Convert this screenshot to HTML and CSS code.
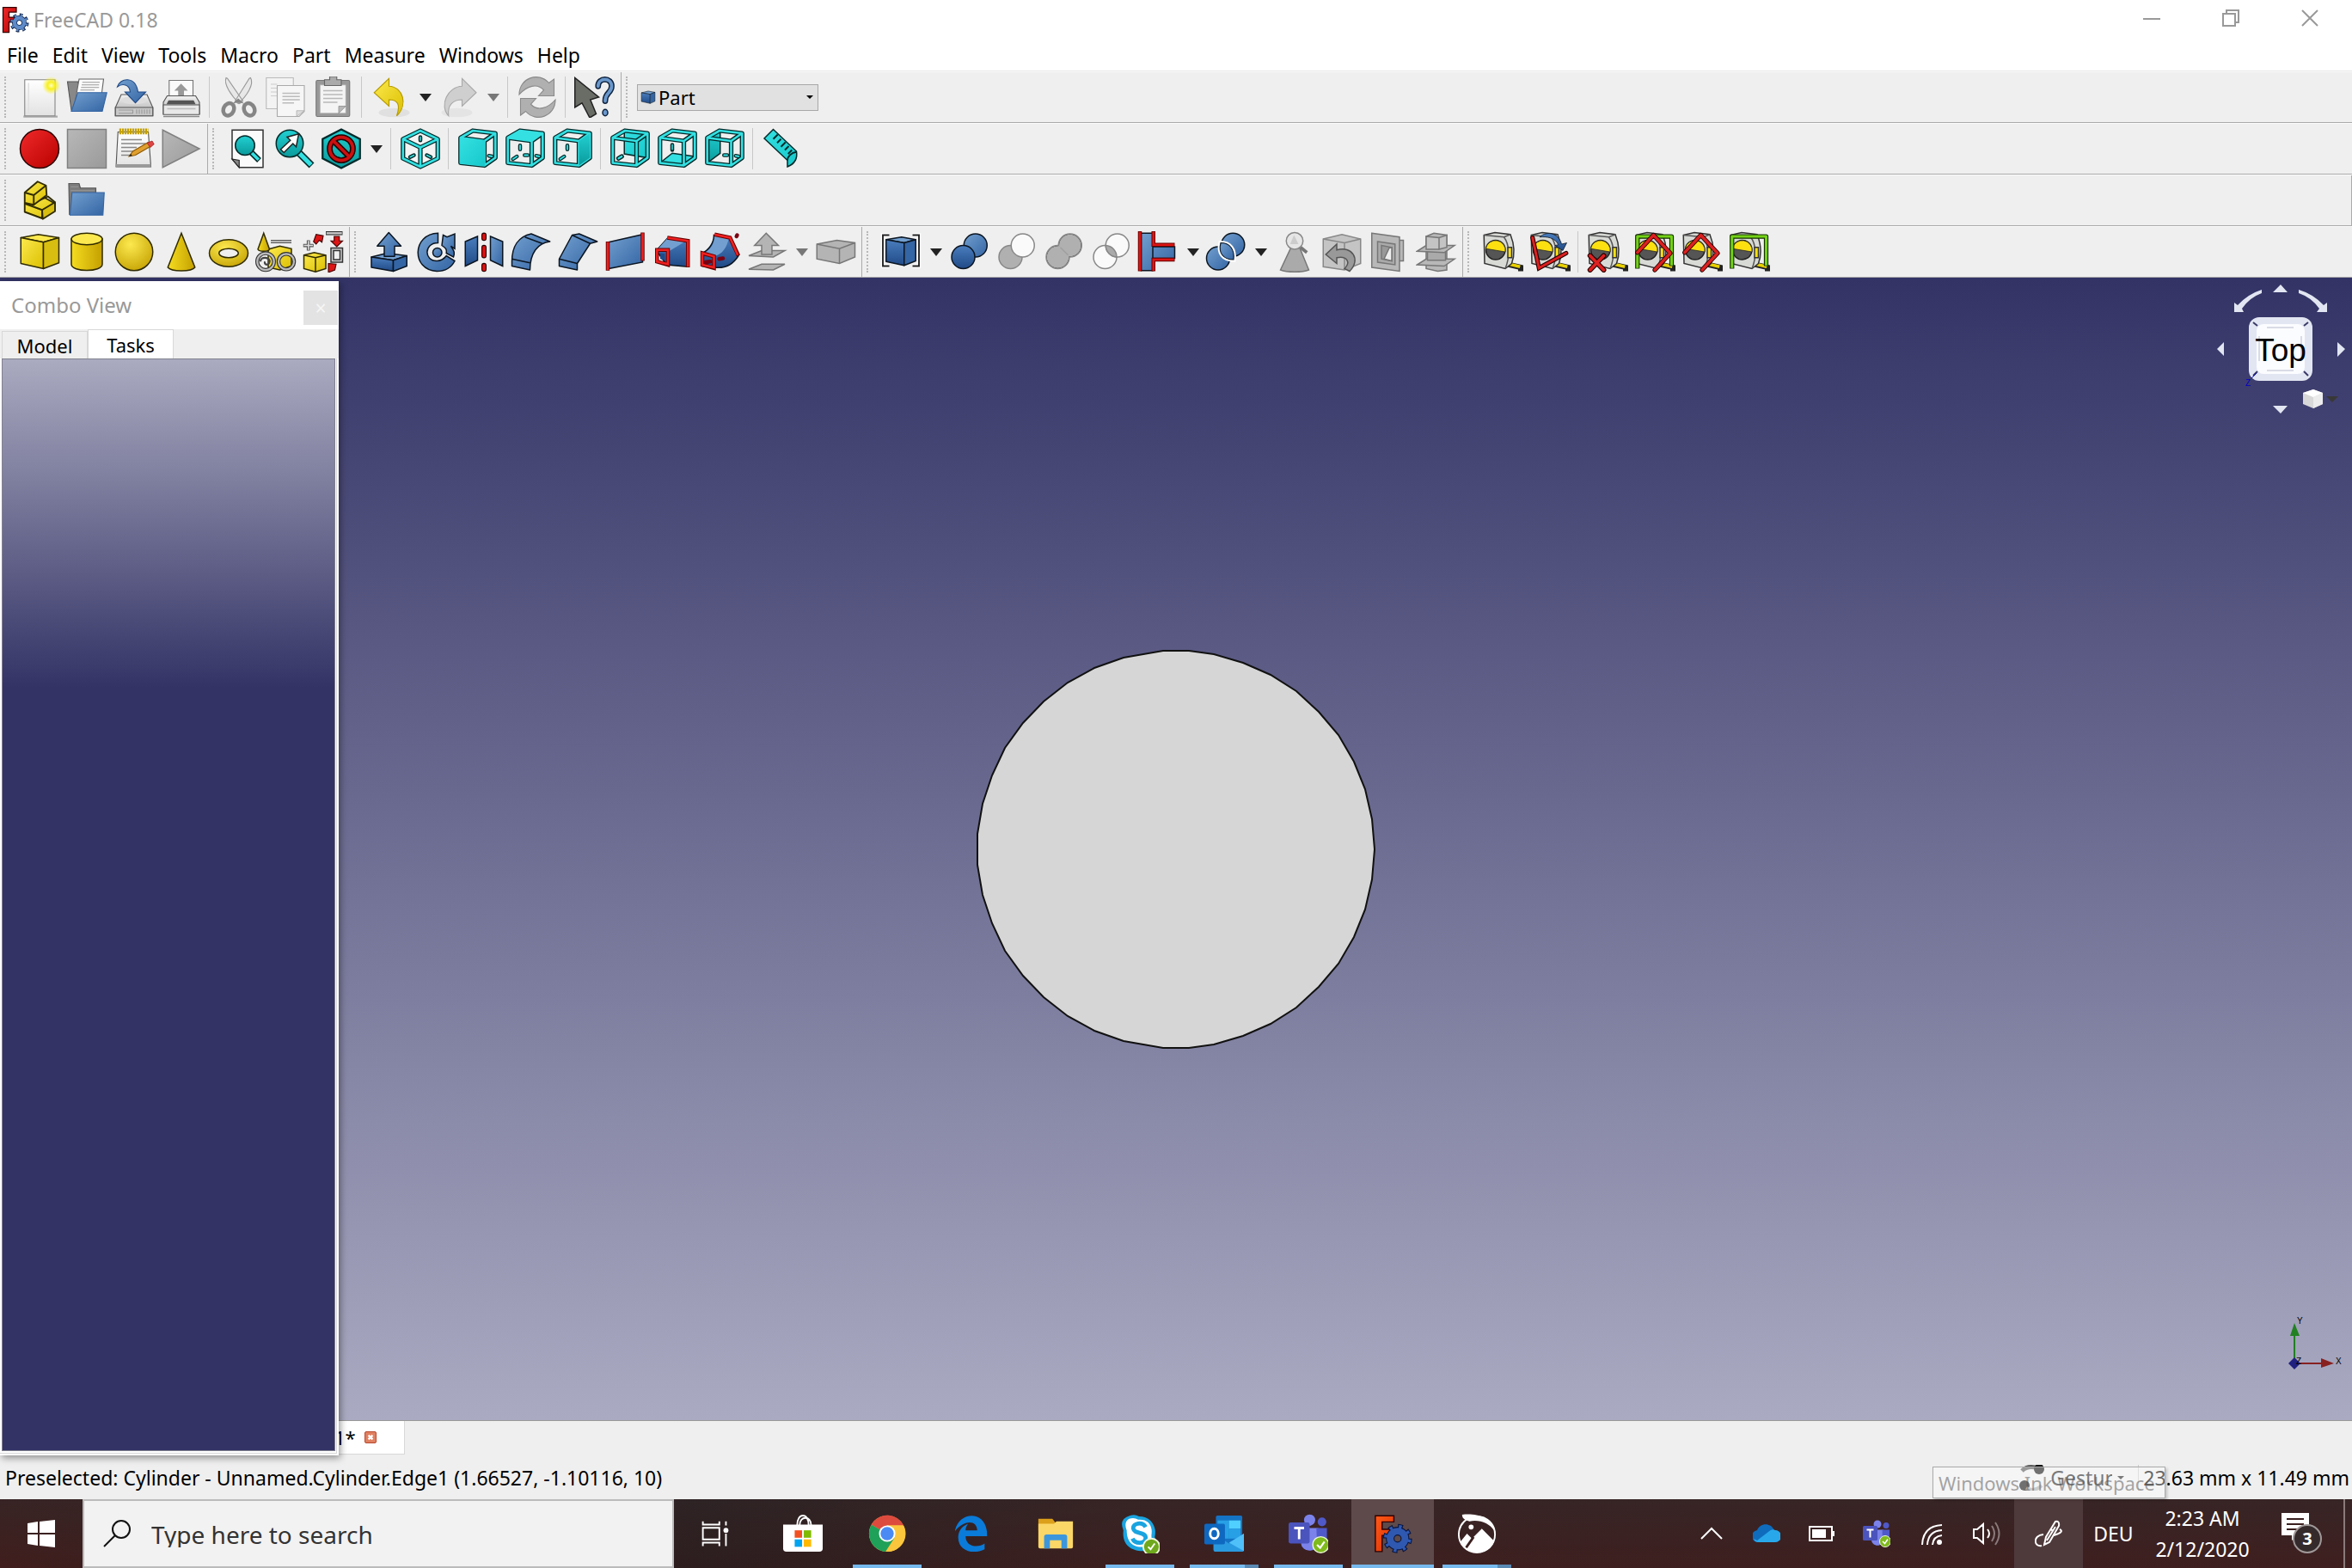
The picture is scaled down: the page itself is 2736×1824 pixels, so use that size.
FILE: index.html
```html
<!DOCTYPE html>
<html lang="en">
<head>
    <meta charset="UTF-8">
    <meta name="viewport" content="width=device-width, initial-scale=1.0">
    <title>FreeCAD 0.18</title>
    <link rel="stylesheet" href="styles.css">
</head>
<body>
    <!-- icon sprite -->
    <svg class="sprite" aria-hidden="true">
        <defs>
            <linearGradient id="gBlue" x1="0" y1="0" x2="1" y2="1"><stop offset="0" stop-color="#729fcf"/><stop offset="1" stop-color="#3465a4"/></linearGradient>
            <linearGradient id="gNavy" x1="0" y1="0" x2="0" y2="1"><stop offset="0" stop-color="#4a7dbd"/><stop offset="1" stop-color="#204a87"/></linearGradient>
            <linearGradient id="gYel" x1="0" y1="0" x2="1" y2="1"><stop offset="0" stop-color="#fce94f"/><stop offset="1" stop-color="#dcc000"/></linearGradient>
            <linearGradient id="gGold" x1="0" y1="0" x2="1" y2="0"><stop offset="0" stop-color="#f5dc20"/><stop offset="1" stop-color="#c4a000"/></linearGradient>
            <radialGradient id="gBall" cx=".4" cy=".3" r=".8"><stop offset="0" stop-color="#fce94f"/><stop offset="1" stop-color="#c4a000"/></radialGradient>
            <linearGradient id="gRed" x1="0" y1="0" x2="1" y2="1"><stop offset="0" stop-color="#f02a2a"/><stop offset="1" stop-color="#b80000"/></linearGradient>
            <linearGradient id="gOrange" x1="0" y1="0" x2="1" y2="1"><stop offset="0" stop-color="#ff5a1a"/><stop offset="1" stop-color="#d83000"/></linearGradient>
            <linearGradient id="gGray" x1="0" y1="0" x2="1" y2="1"><stop offset="0" stop-color="#b8b8b8"/><stop offset="1" stop-color="#9a9a9a"/></linearGradient>
            <linearGradient id="gPaper" x1="0" y1="0" x2="0" y2="1"><stop offset="0" stop-color="#ffffff"/><stop offset="1" stop-color="#e2e2e2"/></linearGradient>
            <linearGradient id="gSteel" x1="0" y1="0" x2="0" y2="1"><stop offset="0" stop-color="#f2f2f2"/><stop offset="1" stop-color="#a8a8a8"/></linearGradient>
            <linearGradient id="gCyan" x1="0" y1="0" x2="1" y2="1"><stop offset="0" stop-color="#34e0e2"/><stop offset="1" stop-color="#16c8ca"/></linearGradient>
            <linearGradient id="gTeal" x1="0" y1="0" x2="0" y2="1"><stop offset="0" stop-color="#22d0d2"/><stop offset="1" stop-color="#0a9a9c"/></linearGradient>
            <radialGradient id="gGlow"><stop offset="0" stop-color="#ffffc0"/><stop offset=".4" stop-color="#f8f020"/><stop offset="1" stop-color="#f8f020" stop-opacity="0"/></radialGradient>
        </defs>

        <!-- file and edit -->
        <symbol id="new" viewBox="0 0 64 64">
            <path d="M7 62H60" stroke="#aaa" stroke-width="3"/>
            <path d="M9 5H56V61H9Z" fill="url(#gPaper)" stroke="#888" stroke-width="1.5"/>
            <path d="M15 10V56" stroke="#e0e0e0" stroke-width="2"/>
            <circle cx="50" cy="14" r="14" fill="url(#gGlow)"/>
        </symbol>
        <symbol id="open" viewBox="0 0 64 64">
            <path d="M2 8H18L20 14H44V52H8Z" fill="#888" stroke="#555" stroke-width="1.5"/>
            <path d="M20 4L58 4L52 50H12Z" fill="#fbfbfb" stroke="#666" stroke-width="1.5"/>
            <path d="M25 9H52M24 13H51M23 17H51M22 21H44" stroke="#999" stroke-width="1.5"/>
            <path d="M18 25H63L56 54H8Z" fill="url(#gBlue)" stroke="#3465a4" stroke-width="1.5"/>
        </symbol>
        <symbol id="save" viewBox="0 0 64 64">
            <path d="M12 28H52L61 48V61H3V48Z" fill="url(#gSteel)" stroke="#555" stroke-width="1.5"/>
            <path d="M3 48H61V61H3Z" fill="#c8c8c8" stroke="#555" stroke-width="1.5"/>
            <ellipse cx="32" cy="37" rx="20" ry="6" fill="#ddd"/>
            <path d="M8 52H30V57H8M36 51V58M40 51V58M44 51V58M48 51V58M52 51V58M56 51V58" stroke="#999" stroke-width="1.5" fill="none"/>
            <path d="M6 16C10 2 34 -2 38 24H50L34 41L18 24H26C25 12 14 10 6 16Z" fill="url(#gBlue)" stroke="#204a87" stroke-width="1.5"/>
        </symbol>
        <symbol id="print" viewBox="0 0 64 64">
            <path d="M13 6H50V38H13Z" fill="#fafafa" stroke="#777" stroke-width="1.5"/>
            <path d="M31.500 11L42 22H36V31H27V22H21Z" fill="#999"/>
            <path d="M10 30H54L60 40V58H4V40Z" fill="url(#gSteel)" stroke="#555" stroke-width="1.5"/>
            <path d="M12 37H51L54 43H9Z" fill="#555"/>
            <path d="M4 44H60V59H4Z" fill="#e8e8e8" stroke="#555" stroke-width="1.500"/>
            <path d="M10 50H54" stroke="#bbb" stroke-width="2"/>
            <path d="M4 62H60" stroke="#888" stroke-width="2"/>
        </symbol>
        <symbol id="cut" viewBox="0 0 64 64">
            <path d="M12 2C8 12 20 30 33 42L38 38L14 3ZM50 2C56 12 44 30 31 42L26 38L48 3Z" fill="#e8e8e8" stroke="#999" stroke-width="1.5"/>
            <ellipse cx="16" cy="51" rx="8" ry="10" fill="none" stroke="#858585" stroke-width="6" transform="rotate(25 16 51)"/>
            <ellipse cx="48" cy="51" rx="8" ry="10" fill="none" stroke="#858585" stroke-width="6" transform="rotate(-25 48 51)"/>
            <path d="M22 42L31 34L40 42L31 40Z" fill="#858585"/>
        </symbol>
        <symbol id="copy" viewBox="0 0 64 64">
            <path d="M1 2H43V50H1Z" fill="#f3f3f3" stroke="#bbb" stroke-width="1.500"/>
            <path d="M8 12H18M8 18H18M8 24H18M8 30H18" stroke="#ccc" stroke-width="1.500"/>
            <path d="M18 14H60V54L52 62H18Z" fill="#f6f6f6" stroke="#aaa" stroke-width="1.500"/>
            <path d="M26 26H53M26 31H53M26 36H53M26 41H44" stroke="#bbb" stroke-width="2"/>
            <path d="M60 53L48 53V62Z" fill="#ddd" stroke="#aaa"/>
        </symbol>
        <symbol id="paste" viewBox="0 0 64 64">
            <rect x="5" y="6" width="52" height="56" rx="2" fill="#999" stroke="#777" stroke-width="1.500"/>
            <path d="M11 13H51V57H11Z" fill="#f4f4f4" stroke="#aaa"/>
            <path d="M16 22H46M16 28H46M16 34H46M16 40H38" stroke="#b8b8b8" stroke-width="2"/>
            <path d="M51 46H40V57Z" fill="#b8b8b8" stroke="#888"/>
            <path d="M18 5H26V0H37V5H44V14H18Z" fill="#aaa" stroke="#666" stroke-width="1.500"/>
        </symbol>
        <symbol id="undo" viewBox="0 0 64 64">
            <ellipse cx="38" cy="56" rx="24" ry="7" fill="#e0e0e0"/>
            <path d="M30 3V15C52 16 60 44 42 61C48 44 44 36 30 36V46L7 25Z" fill="url(#gYel)" stroke="#b59a00" stroke-width="1.500"/>
        </symbol>
        <symbol id="redo" viewBox="0 0 64 64">
            <ellipse cx="30" cy="56" rx="24" ry="7" fill="#e4e4e4"/>
            <path d="M38 3V15C16 16 2 44 17 61C15 44 24 36 38 36V46L60 25Z" fill="#cfcfcf" stroke="#a8a8a8" stroke-width="1.500"/>
        </symbol>
        <symbol id="refresh" viewBox="0 0 64 64">
            <path d="M4 28C4 2 34 -8 50 10L58 4V30H34L42 21C32 10 16 14 4 28Z" fill="#b0b0b0" stroke="#8a8a8a" stroke-width="1.500"/>
            <path d="M60 36C60 62 30 72 14 54L6 60V34H30L22 43C32 54 48 50 60 36Z" fill="#b0b0b0" stroke="#8a8a8a" stroke-width="1.500"/>
        </symbol>
        <symbol id="whats" viewBox="0 0 64 64">
            <path d="M1 2V48L12 41L24 64L34 58L25 36L38 32Z" fill="#6a6c66" stroke="#222" stroke-width="2"/>
            <path d="M37 15C37 1 58 1 58 15C58 26 48 24 48 38" fill="none" stroke="#10243f" stroke-width="9" stroke-linecap="round"/>
            <path d="M37 15C37 1 58 1 58 15C58 26 48 24 48 38" fill="none" stroke="#6a98cc" stroke-width="5" stroke-linecap="round"/>
            <ellipse cx="48" cy="56" rx="4" ry="5" fill="#6a98cc" stroke="#10243f" stroke-width="2"/>
        </symbol>

        <!-- macro -->
        <symbol id="record" viewBox="0 0 64 64"><circle cx="32" cy="32" r="30" fill="url(#gRed)" stroke="#280000" stroke-width="2"/></symbol>
        <symbol id="stop" viewBox="0 0 64 64"><path d="M2 2H62V62H2Z" fill="url(#gGray)" stroke="#808080" stroke-width="2"/></symbol>
        <symbol id="play" viewBox="0 0 64 64"><path d="M3 3L60 32L3 61Z" fill="url(#gGray)" stroke="#808080" stroke-width="2"/></symbol>
        <symbol id="macro" viewBox="0 0 64 64">
            <path d="M7 6H54L58 60H4Z" fill="url(#gPaper)" stroke="#555" stroke-width="1.500"/>
            <path d="M4 56H58V61H4Z" fill="#999"/>
            <path d="M9 5H54" stroke="#c4a000" stroke-width="9" stroke-dasharray="3 1"/>
            <path d="M12 18H44M12 24H50M12 30H36M12 36H40M12 42H28" stroke="#888" stroke-width="2"/>
            <path d="M24 44L30 36L54 22L58 28L34 42Z" fill="#e0a030" stroke="#8f5902" stroke-width="1.500"/>
            <path d="M52 23L60 20L63 25L57 30Z" fill="#dd4444" stroke="#a02020"/>
            <path d="M24 44L27 40L29 43Z" fill="#222"/>
        </symbol>

        <!-- views -->
        <symbol id="fit" viewBox="0 0 64 64">
            <path d="M8 3H56V61H19L8 48Z" fill="#fafafa" stroke="#333" stroke-width="2"/>
            <path d="M8 48L19 50V61Z" fill="#888" stroke="#222" stroke-width="1.500"/>
            <path d="M36 36L50 50" stroke="#042a2a" stroke-width="9"/><path d="M36 36L49 49" stroke="#34e0e2" stroke-width="5"/>
            <circle cx="28" cy="27" r="15" fill="url(#gTeal)" stroke="#042a2a" stroke-width="2"/>
        </symbol>
        <symbol id="fitsel" viewBox="0 0 64 64">
            <path d="M38 38L58 58" stroke="#042a2a" stroke-width="11"/><path d="M38 38L57 57" stroke="#34e0e2" stroke-width="7"/>
            <circle cx="24" cy="24" r="21" fill="url(#gTeal)" stroke="#042a2a" stroke-width="2"/>
            <path d="M38 9L20 14L25 19L10 33L15 38L29 24L34 29Z" fill="#fff" stroke="#222" stroke-width="2"/>
        </symbol>
        <symbol id="nodraw" viewBox="0 0 64 64">
            <path d="M32 2L61 17V47L32 62L3 47V17Z" fill="url(#gTeal)" stroke="#042a2a" stroke-width="3"/>
            <circle cx="32" cy="32" r="18" fill="none" stroke="#280000" stroke-width="9"/>
            <path d="M20 20L44 44" stroke="#280000" stroke-width="9"/>
            <circle cx="32" cy="32" r="18" fill="none" stroke="#cc1010" stroke-width="5"/>
            <path d="M20 20L44 44" stroke="#cc1010" stroke-width="5"/>
        </symbol>
        <symbol id="iso" viewBox="0 0 64 64">
            <path d="M32 4L59 17V47L32 60L5 47V17Z" fill="#f4f4f4"/>
            <g fill="none" stroke-linejoin="round">
                <path d="M32 4L59 17V47L32 60L5 47V17ZM5 17L32 30L59 17M32 30V60" stroke="#042a2a" stroke-width="7"/>
                <path d="M32 4L59 17V47L32 60L5 47V17ZM5 17L32 30L59 17M32 30V60" stroke="#34e0e2" stroke-width="3.500"/>
                <path d="M32 14V19M16 45L22 42M42 42L48 45" stroke="#042a2a" stroke-width="6" stroke-linecap="round"/>
                <path d="M32 14V19M16 45L22 42M42 42L48 45" stroke="#34e0e2" stroke-width="2" stroke-linecap="round"/>
            </g>
        </symbol>
        <g id="frame" fill="none" stroke-linejoin="round">
            <path d="M5 15L24 4L59 8V46L42 58L5 54ZM5 15L42 20L59 8M42 20V58" stroke="#042a2a" stroke-width="7"/>
            <path d="M5 15L24 4L59 8V46L42 58L5 54ZM5 15L42 20L59 8M42 20V58" stroke="#34e0e2" stroke-width="3.500"/>
        </g>
        <g id="ticks" fill="none" stroke-linecap="round">
            <path d="M24 27V33M13 48L19 44" stroke="#042a2a" stroke-width="6"/><path d="M24 27V33M13 48L19 44" stroke="#34e0e2" stroke-width="2.500"/>
        </g>
        <g id="dash" fill="none" stroke-linecap="round">
            <path d="M31 42H36M49 43L54 44" stroke="#042a2a" stroke-width="6"/><path d="M31 42H36M49 43L54 44" stroke="#34e0e2" stroke-width="2.500"/>
        </g>
        <symbol id="vfront" viewBox="0 0 64 64"><use href="#dash"/><use href="#frame"/><path d="M4 14L43 19V59L4 55Z" fill="url(#gCyan)"/></symbol>
        <symbol id="vtop" viewBox="0 0 64 64"><use href="#ticks"/><use href="#dash"/><use href="#frame"/><path d="M5 15L24 4L59 8L42 20Z" fill="#34e0e2"/></symbol>
        <symbol id="vright" viewBox="0 0 64 64"><use href="#ticks"/><use href="#frame"/><path d="M42 20L59 8V46L42 58Z" fill="url(#gTeal)"/></symbol>
        <symbol id="vrear" viewBox="0 0 64 64"><path d="M23 5L59 8V46L23 40Z" fill="url(#gCyan)" stroke="#042a2a" stroke-width="2"/><path d="M14 47L19 44" stroke="#042a2a" stroke-width="7" stroke-linecap="round"/><path d="M14 47L19 44" stroke="#34e0e2" stroke-width="3" stroke-linecap="round"/><use href="#frame"/></symbol>
        <symbol id="vbottom" viewBox="0 0 64 64"><path d="M24 26V34" stroke="#042a2a" stroke-width="6" stroke-linecap="round"/><path d="M24 26V33" stroke="#34e0e2" stroke-width="2" stroke-linecap="round"/><path d="M5 54L24 39L59 44L42 58Z" fill="#34e0e2" stroke="#042a2a" stroke-width="2"/><use href="#frame"/></symbol>
        <symbol id="vleft" viewBox="0 0 64 64"><path d="M5 15L25 5V39L5 54Z" fill="url(#gTeal)" stroke="#042a2a" stroke-width="2"/><use href="#dash"/><use href="#frame"/></symbol>
        <symbol id="ruler" viewBox="0 0 64 64">
            <path d="M4 16L18 2L54 36C56 48 50 56 40 60V50Z" fill="url(#gCyan)" stroke="#042a2a" stroke-width="2"/>
            <path d="M40 50C40 44 46 38 54 37M18 17L25 10M24 23L30 17M30 29L37 22M36 34L42 28M41 40L47 34" fill="none" stroke="#042a2a" stroke-width="2.500"/>
        </symbol>

        <!-- structure -->
        <symbol id="part" viewBox="0 0 64 64">
            <g stroke="#302b00" stroke-width="2.500" stroke-linejoin="round">
                <path d="M9 37L40 28L56 37L36 47V60L9 50Z" fill="url(#gYel)"/>
                <path d="M36 47L56 35V49L37 61Z" fill="#d8be10"/>
                <path d="M9 37L36 47M24 36L45 26L56 35" fill="none"/>
                <path d="M9 20L29 3L42 9L43 24L23 39L9 36Z" fill="url(#gYel)"/>
                <path d="M9 20L23 24L42 9M23 24V39" fill="none"/>
            </g>
        </symbol>
        <symbol id="group" viewBox="0 0 64 64">
            <path d="M4 6H20L22 13H46V54H5Z" fill="#7c7c7c" stroke="#555" stroke-width="1.500"/>
            <path d="M7 17H44M7 11H19" stroke="#999" stroke-width="1.500"/>
            <path d="M9 20H59L57 55H6Z" fill="url(#gBlue)" stroke="#3465a4" stroke-width="1.500"/>
        </symbol>

        <!-- primitives -->
        <symbol id="box" viewBox="0 0 64 64"><g stroke="#302b00" stroke-width="2" stroke-linejoin="round"><path d="M3 10L30 5L62 10L38 17Z" fill="#fce94f"/><path d="M3 10L38 17V58L3 50Z" fill="url(#gYel)"/><path d="M38 17L62 10V49L38 58Z" fill="#d8be10"/></g></symbol>
        <symbol id="cyl" viewBox="0 0 64 64"><g stroke="#302b00" stroke-width="2"><path d="M8 12V51C8 64 56 64 56 51V12Z" fill="url(#gGold)"/><ellipse cx="32" cy="12" rx="24" ry="9" fill="#fce94f"/></g></symbol>
        <symbol id="ball" viewBox="0 0 64 64"><circle cx="32" cy="32" r="29" fill="url(#gBall)" stroke="#302b00" stroke-width="2"/></symbol>
        <symbol id="cone" viewBox="0 0 64 64"><path d="M32 3L53 56C48 63 16 63 11 56Z" fill="url(#gGold)" stroke="#302b00" stroke-width="2"/></symbol>
        <symbol id="torus" viewBox="0 0 64 64"><path fill-rule="evenodd" d="M2 34A30 21 0 1 1 62 34A30 21 0 1 1 2 34ZM17 34A15 7 0 1 0 47 34A15 7 0 1 0 17 34Z" fill="url(#gBall)" stroke="#302b00" stroke-width="2"/></symbol>
        <symbol id="prims" viewBox="0 0 64 64">
            <path d="M20 28L38 23L56 27V54L38 60L20 56Z" fill="url(#gYel)" stroke="#302b00" stroke-width="2"/>
            <path d="M13 3L22 28C20 32 6 32 4 28Z" fill="url(#gGold)" stroke="#302b00" stroke-width="2"/>
            <path d="M24 16H56" stroke="#444" stroke-width="5"/><path d="M24 16H56" stroke="#ddd" stroke-width="2"/>
            <g fill="none"><circle cx="16" cy="47" r="13" stroke="#333" stroke-width="6"/><circle cx="16" cy="47" r="13" stroke="#bbb" stroke-width="3"/><path d="M8 47C8 38 24 40 22 48C20 54 13 52 15 47" stroke="#444" stroke-width="3"/><circle cx="48" cy="47" r="12" stroke="#333" stroke-width="6"/><circle cx="48" cy="47" r="12" stroke="#bbb" stroke-width="3"/></g>
        </symbol>
        <symbol id="builder" viewBox="0 0 64 64">
            <path d="M2 37L18 33L36 37V58L20 63L2 58Z" fill="url(#gYel)" stroke="#302b00" stroke-width="2"/><path d="M2 37L20 41L36 37M20 41V63" fill="none" stroke="#302b00" stroke-width="2"/>
            <path d="M9 14V30M1 22H17" stroke="#555" stroke-width="5"/><path d="M9 15V29M2 22H16" stroke="#ddd" stroke-width="2"/>
            <path d="M36 3H62" stroke="#333" stroke-width="6"/><path d="M37 3H61" stroke="#ccc" stroke-width="3"/>
            <path d="M46 28H60V46H46Z" fill="none" stroke="#333" stroke-width="6"/><path d="M46 28H60V46H46Z" fill="none" stroke="#ccc" stroke-width="2"/>
            <path d="M17 16L21 5L32 7L30 17L26 14L21 20ZM49 8H57V15H62L53 24L44 15H49ZM40 50L52 51L50 60L40 64Z" fill="#dd1515" stroke="#400" stroke-width="1.500"/>
        </symbol>

        <!-- part tools -->
        <symbol id="bluebox" viewBox="0 0 64 64"><g stroke="#0b1521" stroke-width="2" stroke-linejoin="round"><path d="M4 14L32 7L60 12L40 20Z" fill="#729fcf"/><path d="M4 14L40 20V58L4 50Z" fill="url(#gNavy)"/><path d="M40 20L60 12V49L40 58Z" fill="#3465a4"/></g></symbol>
        <symbol id="extrude" viewBox="0 0 64 64"><g stroke="#0b1521" stroke-width="2" stroke-linejoin="round"><path d="M4 40L28 34L59 38L38 45Z" fill="#729fcf"/><path d="M4 40L38 45V62L4 56Z" fill="url(#gNavy)"/><path d="M38 45L59 38V54L38 62Z" fill="#3465a4"/><path d="M31 2L50 23H40V39H24V23H13Z" fill="url(#gBlue)"/></g></symbol>
        <symbol id="revolve" viewBox="0 0 64 64"><g stroke="#0b1521" stroke-width="2" fill="url(#gBlue)"><path d="M34 3V18C12 18 12 46 32 46C40 46 44 42 47 38L60 46C54 58 44 62 32 62C-8 60 -6 4 34 3Z"/><path d="M40 22L42 6L48 9L60 4V27L54 23C60 32 60 34 58 40L47 34C48 28 46 26 40 22Z"/><circle cx="33" cy="33" r="7"/></g></symbol>
        <symbol id="mirror" viewBox="0 0 64 64"><g stroke="#0b1521" stroke-width="2"><path d="M3 16L22 8V45L3 54Z" fill="url(#gNavy)"/><path d="M42 8L61 16V54L42 45Z" fill="url(#gBlue)"/></g><path d="M32 6V11M32 25V38M32 53V59" stroke="#280000" stroke-width="8" stroke-linecap="round"/><path d="M32 6V11M32 25V38M32 53V59" stroke="#e01010" stroke-width="5" stroke-linecap="round"/></symbol>
        <symbol id="fillet" viewBox="0 0 64 64"><g stroke="#0b1521" stroke-width="2" stroke-linejoin="round"><path d="M2 47C2 24 12 8 32 4L61 16C42 18 30 34 30 60L2 54Z" fill="url(#gBlue)"/><path d="M2 43L30 49M22 9L49 19" fill="none"/></g></symbol>
        <symbol id="chamfer" viewBox="0 0 64 64"><g stroke="#0b1521" stroke-width="2" stroke-linejoin="round"><path d="M2 43L22 6L33 4L61 16L50 19L30 50V60L2 54Z" fill="url(#gBlue)"/><path d="M2 43L30 50M22 6L50 19" fill="none"/></g></symbol>
        <symbol id="ruled" viewBox="0 0 64 64"><path d="M5 17L58 5V48L5 58Z" fill="url(#gBlue)" stroke="#0b1521" stroke-width="2"/><path d="M4 16V61M58 2V46" stroke="#600" stroke-width="6"/><path d="M4 17V60M58 3V45" stroke="#ef2020" stroke-width="3.500"/></symbol>
        <symbol id="loft" viewBox="0 0 64 64"><path d="M24 10L54 14V55L22 52L6 30Z" fill="url(#gNavy)" stroke="#0b1521" stroke-width="2"/><path d="M24 10L54 14L24 32L6 30Z" fill="#729fcf"/><path d="M23 10L55 15V56M7 29H24V52L7 47Z" fill="none" stroke="#600" stroke-width="6"/><path d="M23 10L55 15V55M7 29H24V51L7 47Z" fill="none" stroke="#ef2020" stroke-width="3.500"/><path d="M12 34L19 35V45L12 43Z" fill="#204a87"/></symbol>
        <symbol id="sweep" viewBox="0 0 64 64"><path d="M3 34C14 30 22 18 22 6L46 10L60 38C50 54 36 58 22 56L4 54Z" fill="url(#gNavy)" stroke="#0b1521" stroke-width="2"/><path d="M23 7L45 11C42 26 34 36 24 38L6 34C18 28 23 18 23 7Z" fill="#729fcf"/><path d="M23 5L47 10L60 38M4 34L22 39V57L4 52Z" fill="none" stroke="#600" stroke-width="6"/><path d="M23 5L47 10L59 37M4 34L22 39V56L4 52Z" fill="none" stroke="#ef2020" stroke-width="3.500"/><path d="M9 48L16 47M30 43L36 42M58 6L57 8" stroke="#7a0010" stroke-width="6" stroke-linecap="round"/></symbol>
        <symbol id="offset" viewBox="0 0 64 64"><g fill="#b4b4b4" stroke="#777" stroke-width="2"><path d="M4 38L24 30H60L42 40Z"/><path d="M4 59L24 51H60L42 60Z"/><path d="M31 3L50 22H40V36H24V22H13Z"/></g></symbol>
        <symbol id="thick" viewBox="0 0 64 64"><g fill="#b4b4b4" stroke="#777" stroke-width="2"><path d="M3 20L34 14L62 18V40L38 50L3 43Z"/><path d="M3 20L38 27L62 18M38 27V50" fill="none"/></g></symbol>
        <symbol id="compound" viewBox="0 0 64 64"><path d="M14 6H4V54H14M50 6H60V54H50" fill="none" stroke="#fff" stroke-width="6"/><g stroke="#0b1521" stroke-width="2" stroke-linejoin="round"><path d="M9 13L33 9L55 13L37 18Z" fill="#729fcf"/><path d="M9 13L37 18V53L9 47Z" fill="url(#gNavy)"/><path d="M37 18L55 13V46L37 53Z" fill="#3465a4"/></g><path d="M14 6H4V54H14M50 6H60V54H50" fill="none" stroke="#222" stroke-width="2.500"/></symbol>
        <symbol id="bool" viewBox="0 0 64 64"><g stroke="#0b1521" stroke-width="2"><circle cx="41" cy="22" r="18" fill="url(#gBlue)"/><circle cx="22" cy="40" r="18" fill="url(#gNavy)"/></g></symbol>
        <symbol id="bcut" viewBox="0 0 64 64"><g stroke="#888" stroke-width="2"><circle cx="22" cy="40" r="18" fill="#b0b0b0"/><circle cx="41" cy="22" r="18" fill="#fafafa"/></g></symbol>
        <symbol id="bunion" viewBox="0 0 64 64"><g stroke="#888" stroke-width="2"><circle cx="22" cy="40" r="18"/><circle cx="41" cy="22" r="18"/></g><g fill="#b0b0b0"><circle cx="22" cy="40" r="17"/><circle cx="41" cy="22" r="17"/></g><path d="M26 25L38 37" stroke="#a0a0a0" stroke-width="2"/></symbol>
        <symbol id="bcommon" viewBox="0 0 64 64"><g stroke="#888" stroke-width="2" fill="#fafafa"><circle cx="22" cy="40" r="18"/><circle cx="41" cy="22" r="18"/><path d="M23 22A18 18 0 0 1 40 40A18 18 0 0 1 23 22Z" fill="#aaa"/></g></symbol>
        <symbol id="join" viewBox="0 0 64 64"><path d="M6 3H24V61H6ZM24 24H58V42H24Z" fill="url(#gBlue)" stroke="#0b1521" stroke-width="2"/><path d="M4 0V62M25 0V21H58M25 62V44H58" fill="none" stroke="#600" stroke-width="6"/><path d="M4 1V61M25 1V21H57M25 61V44H57" fill="none" stroke="#dd1515" stroke-width="3.500"/></symbol>
        <symbol id="split" viewBox="0 0 64 64"><g stroke="#0b1521" stroke-width="2"><circle cx="43" cy="21" r="18" fill="url(#gBlue)"/><circle cx="20" cy="42" r="18" fill="url(#gBlue)"/></g><path d="M24 18C38 18 46 28 44 44C28 44 20 34 24 18Z" fill="url(#gNavy)" stroke="#fff" stroke-width="7"/><path d="M24 18C38 18 46 28 44 44C28 44 20 34 24 18Z" fill="url(#gBlue)" stroke="#0b1521" stroke-width="1.500"/></symbol>
        <symbol id="check" viewBox="0 0 64 64"><path d="M26 26H40L54 60C44 64 20 64 10 60Z" fill="#aaa" stroke="#777" stroke-width="2"/><path d="M40 24L51 33" stroke="#777" stroke-width="5"/><circle cx="32" cy="15" r="13" fill="#e6e6e6" stroke="#888" stroke-width="2"/><path d="M31 6L25 20H38Z" fill="#ccc"/></symbol>
        <symbol id="defeat" viewBox="0 0 64 64"><path d="M3 12L32 5L61 12V50L36 60L3 55Z" fill="#c4c4c4" stroke="#888" stroke-width="2"/><path d="M3 12L36 18L61 12M36 18V60" fill="none" stroke="#888" stroke-width="2"/><path d="M24 20V29C48 22 62 44 44 62L36 58C46 48 40 38 24 41V50L7 36Z" fill="#999" stroke="#555" stroke-width="2"/></symbol>
        <symbol id="section" viewBox="0 0 64 64"><g fill="#b8b8b8" stroke="#777" stroke-width="2"><path d="M46 14H54V46H46Z"/><path d="M5 3L48 9V62L5 56Z"/><path d="M14 16L41 20V52L14 48Z" fill="#aaa"/><path d="M20 22L36 25V46L20 43Z" fill="#999"/><path d="M32 26L36 25V46L24 43Z" fill="#eee"/></g></symbol>
        <symbol id="cross" viewBox="0 0 64 64"><g fill="#b8b8b8" stroke="#777" stroke-width="2"><path d="M16 8L28 3L48 6V60L34 62L16 58Z"/><path d="M2 52L16 43H60L44 54Z"/><path d="M18 28H46V45H18Z" fill="#aaa"/><path d="M2 31L16 22H60L44 33Z"/><path d="M16 8L36 10V28H16ZM36 10L48 6V25L36 28Z" fill="#c4c4c4"/></g></symbol>

        <!-- measure -->
        <symbol id="tape" viewBox="0 0 64 64">
            <path d="M34 50L60 56V62" fill="none" stroke="#222" stroke-width="8"/><path d="M34 49L59 55" stroke="#e8d000" stroke-width="5"/>
            <path d="M3 6L20 2L44 5C50 20 52 34 46 50L36 58L4 50Z" fill="#d8dad6" stroke="#333" stroke-width="2"/>
            <path d="M3 6L34 9L44 5M34 9C42 20 44 38 36 58" fill="none" stroke="#555" stroke-width="2"/>
            <circle cx="21" cy="29" r="15" fill="#555" stroke="#222" stroke-width="2"/><path d="M6 27A15 15 0 0 1 36 32Z" fill="#fce010" stroke="#222"/>
            <path d="M40 25H46V41H40Z" fill="#fce010" stroke="#333" stroke-width="2"/>
        </symbol>
        <symbol id="angle" viewBox="0 0 64 64"><use href="#tape"/><path d="M16 9C28 -2 46 4 50 20L58 18L52 30L40 22L45 21C40 10 28 8 16 9Z" fill="url(#gNavy)" stroke="#0b1521"/><path d="M5 10L15 57L57 34" fill="none" stroke="#280000" stroke-width="7" stroke-linecap="round"/><path d="M5 10L15 57L57 34" fill="none" stroke="#dd2020" stroke-width="4" stroke-linecap="round"/></symbol>
        <symbol id="mclear" viewBox="0 0 64 64"><use href="#tape"/><path d="M5 38L26 60M26 38L5 60" stroke="#280000" stroke-width="8" stroke-linecap="round"/><path d="M5 38L26 60M26 38L5 60" stroke="#dd2020" stroke-width="5" stroke-linecap="round"/></symbol>
        <g id="green" fill="none" stroke-linejoin="round"><path d="M5 58V8H58V54" stroke="#153000" stroke-width="7"/><path d="M5 57V8H58V53" stroke="#73d216" stroke-width="4"/></g>
        <g id="redcorner" fill="none" stroke-linecap="round" stroke-linejoin="round"><path d="M5 33L30 6L56 34L32 60" stroke="#280000" stroke-width="7"/><path d="M5 33L30 6L56 34L32 60" stroke="#dd2020" stroke-width="4.500"/></g>
        <symbol id="mall" viewBox="0 0 64 64"><use href="#tape"/><use href="#green"/><use href="#redcorner"/></symbol>
        <symbol id="m3d" viewBox="0 0 64 64"><use href="#tape"/><use href="#redcorner"/></symbol>
        <symbol id="mdelta" viewBox="0 0 64 64"><use href="#tape"/><use href="#green"/></symbol>

        <!-- application logos -->
        <symbol id="freecad" viewBox="0 0 64 64">
            <path d="M3 3H34V14H17V26H32V37H17V61H3Z" fill="url(#gRed)" stroke="#300" stroke-width="2.500"/>
            <circle cx="41" cy="39" r="18" fill="none" stroke="#0b1e45" stroke-width="8" stroke-dasharray="7 7.140"/>
            <circle cx="41" cy="39" r="11" fill="none" stroke="#0b1e45" stroke-width="12"/>
            <circle cx="41" cy="39" r="17" fill="none" stroke="#5f8bc8" stroke-width="7" stroke-dasharray="4 9.350" stroke-dashoffset="-2"/>
            <circle cx="41" cy="39" r="11" fill="none" stroke="#5f8bc8" stroke-width="9"/>
        </symbol>
        <symbol id="freecad-task" viewBox="0 0 64 64">
            <path d="M4 3H34V13H15V25H32V35H15V61H4Z" fill="url(#gOrange)" stroke="#300" stroke-width="2"/>
            <circle cx="40" cy="40" r="19" fill="none" stroke="#0a1640" stroke-width="9" stroke-dasharray="7.500 7.420"/>
            <circle cx="40" cy="40" r="12" fill="none" stroke="#0a1640" stroke-width="14"/>
            <circle cx="40" cy="40" r="12" fill="none" stroke="#2f58b0" stroke-width="11"/>
            <circle cx="40" cy="40" r="19" fill="none" stroke="#2f58b0" stroke-width="6" stroke-dasharray="4.500 10.420" stroke-dashoffset="-1.500"/>
        </symbol>
        <symbol id="teams" viewBox="0 0 64 64">
            <circle cx="34" cy="10" r="9" fill="#7b83eb"/><circle cx="54" cy="13" r="7" fill="#5059c9"/>
            <path d="M24 23H48V46C48 64 20 64 20 46Z" fill="#7b83eb"/><path d="M45 23H62V42C62 52 54 54 46 52Z" fill="#5059c9"/>
            <rect y="14" width="34" height="34" rx="3" fill="#4b53bc"/><path d="M9 23H25M17 23V41" stroke="#fff" stroke-width="4"/>
            <circle cx="52" cy="50" r="13" fill="#7fba1c" stroke="#e8f4d0" stroke-width="2"/><path d="M46 50L51 55L58 45" fill="none" stroke="#fff" stroke-width="3"/>
        </symbol>
    </svg>

    <header class="titlebar">
        <svg class="logo"><use href="#freecad"/></svg>
        <span class="app-name">FreeCAD 0.18</span>
        <div class="window-buttons">
            <button aria-label="Minimize"><svg viewBox="0 0 20 20"><path d="M0 11H20"/></svg></button>
            <button aria-label="Restore"><svg viewBox="0 0 20 20"><path d="M1 5H15V19H1ZM5 5V1H19V15H15"/></svg></button>
            <button aria-label="Close"><svg viewBox="0 0 20 20"><path d="M1 1L19 19M19 1L1 19"/></svg></button>
        </div>
    </header>

    <nav class="menubar">
        <button>File</button><button>Edit</button><button>View</button><button>Tools</button><button>Macro</button><button>Part</button><button>Measure</button><button>Windows</button><button>Help</button>
    </nav>

    <div class="toolrow">
        <div class="toolbar">
            <button class="tool" aria-label="New"><svg><use href="#new"/></svg></button>
            <button class="tool" aria-label="Open"><svg><use href="#open"/></svg></button>
            <button class="tool" aria-label="Save"><svg><use href="#save"/></svg></button>
            <button class="tool" aria-label="Print"><svg><use href="#print"/></svg></button>
            <span class="sep"></span>
            <button class="tool" aria-label="Cut" disabled><svg><use href="#cut"/></svg></button>
            <button class="tool" aria-label="Copy" disabled><svg><use href="#copy"/></svg></button>
            <button class="tool" aria-label="Paste" disabled><svg><use href="#paste"/></svg></button>
            <span class="sep"></span>
            <button class="tool drop" aria-label="Undo"><svg><use href="#undo"/></svg></button>
            <button class="tool drop" aria-label="Redo" disabled><svg><use href="#redo"/></svg></button>
            <span class="sep"></span>
            <button class="tool" aria-label="Refresh" disabled><svg><use href="#refresh"/></svg></button>
            <span class="sep"></span>
            <button class="tool" aria-label="What's this?"><svg><use href="#whats"/></svg></button>
        </div>
        <div class="toolbar last">
            <div class="workbench">
                <svg class="wb-icon"><use href="#bluebox"/></svg>
                <select aria-label="Workbench"><option>Part</option></select>
            </div>
        </div>
    </div>

    <div class="toolrow">
        <div class="toolbar">
            <button class="tool" aria-label="Record macro"><svg><use href="#record"/></svg></button>
            <button class="tool" aria-label="Stop macro" disabled><svg><use href="#stop"/></svg></button>
            <button class="tool" aria-label="Macros"><svg><use href="#macro"/></svg></button>
            <button class="tool" aria-label="Execute macro" disabled><svg><use href="#play"/></svg></button>
        </div>
        <div class="toolbar last">
            <button class="tool" aria-label="Fit all"><svg><use href="#fit"/></svg></button>
            <button class="tool" aria-label="Fit selection"><svg><use href="#fitsel"/></svg></button>
            <button class="tool drop" aria-label="Draw style"><svg><use href="#nodraw"/></svg></button>
            <span class="sep"></span>
            <button class="tool" aria-label="Isometric"><svg><use href="#iso"/></svg></button>
            <span class="sep"></span>
            <button class="tool" aria-label="Front"><svg><use href="#vfront"/></svg></button>
            <button class="tool" aria-label="Top view"><svg><use href="#vtop"/></svg></button>
            <button class="tool" aria-label="Right"><svg><use href="#vright"/></svg></button>
            <span class="sep"></span>
            <button class="tool" aria-label="Rear"><svg><use href="#vrear"/></svg></button>
            <button class="tool" aria-label="Bottom"><svg><use href="#vbottom"/></svg></button>
            <button class="tool" aria-label="Left"><svg><use href="#vleft"/></svg></button>
            <span class="sep"></span>
            <button class="tool" aria-label="Measure distance"><svg><use href="#ruler"/></svg></button>
        </div>
    </div>

    <div class="toolrow">
        <div class="toolbar wide">
            <button class="tool" aria-label="Create part"><svg><use href="#part"/></svg></button>
            <button class="tool" aria-label="Create group"><svg><use href="#group"/></svg></button>
        </div>
    </div>

    <div class="toolrow">
        <div class="toolbar">
            <button class="tool" aria-label="Box"><svg><use href="#box"/></svg></button>
            <button class="tool" aria-label="Cylinder"><svg><use href="#cyl"/></svg></button>
            <button class="tool" aria-label="Sphere"><svg><use href="#ball"/></svg></button>
            <button class="tool" aria-label="Cone"><svg><use href="#cone"/></svg></button>
            <button class="tool" aria-label="Torus"><svg><use href="#torus"/></svg></button>
            <button class="tool" aria-label="Create primitives"><svg><use href="#prims"/></svg></button>
            <button class="tool" aria-label="Shape builder"><svg><use href="#builder"/></svg></button>
        </div>
        <div class="toolbar">
            <button class="tool" aria-label="Extrude"><svg><use href="#extrude"/></svg></button>
            <button class="tool" aria-label="Revolve"><svg><use href="#revolve"/></svg></button>
            <button class="tool" aria-label="Mirror"><svg><use href="#mirror"/></svg></button>
            <button class="tool" aria-label="Fillet"><svg><use href="#fillet"/></svg></button>
            <button class="tool" aria-label="Chamfer"><svg><use href="#chamfer"/></svg></button>
            <button class="tool" aria-label="Ruled surface"><svg><use href="#ruled"/></svg></button>
            <button class="tool" aria-label="Loft"><svg><use href="#loft"/></svg></button>
            <button class="tool" aria-label="Sweep"><svg><use href="#sweep"/></svg></button>
            <button class="tool drop" aria-label="Offset" disabled><svg><use href="#offset"/></svg></button>
            <button class="tool" aria-label="Thickness" disabled><svg><use href="#thick"/></svg></button>
        </div>
        <div class="toolbar">
            <button class="tool drop" aria-label="Compound"><svg><use href="#compound"/></svg></button>
            <button class="tool" aria-label="Boolean"><svg><use href="#bool"/></svg></button>
            <button class="tool" aria-label="Cut shapes" disabled><svg><use href="#bcut"/></svg></button>
            <button class="tool" aria-label="Union" disabled><svg><use href="#bunion"/></svg></button>
            <button class="tool" aria-label="Intersection" disabled><svg><use href="#bcommon"/></svg></button>
            <button class="tool drop" aria-label="Join"><svg><use href="#join"/></svg></button>
            <button class="tool drop" aria-label="Split"><svg><use href="#split"/></svg></button>
            <button class="tool" aria-label="Check geometry" disabled><svg><use href="#check"/></svg></button>
            <button class="tool" aria-label="Defeaturing" disabled><svg><use href="#defeat"/></svg></button>
            <button class="tool" aria-label="Section" disabled><svg><use href="#section"/></svg></button>
            <button class="tool" aria-label="Cross-sections" disabled><svg><use href="#cross"/></svg></button>
        </div>
        <div class="toolbar last">
            <button class="tool" aria-label="Measure linear"><svg><use href="#tape"/></svg></button>
            <button class="tool" aria-label="Measure angular"><svg><use href="#angle"/></svg></button>
            <span class="sep"></span>
            <button class="tool" aria-label="Clear all"><svg><use href="#mclear"/></svg></button>
            <button class="tool" aria-label="Toggle all"><svg><use href="#mall"/></svg></button>
            <button class="tool" aria-label="Toggle 3D"><svg><use href="#m3d"/></svg></button>
            <button class="tool" aria-label="Toggle delta"><svg><use href="#mdelta"/></svg></button>
        </div>
    </div>

    <main class="workspace">
        <section class="view3d">
            <!-- top face of the cylinder, 41 segments -->
            <svg class="model" viewBox="-232 -232 464 464">
                <polygon points="231,0 228,-35 220,-70 207,-102 189,-133 166,-160 140,-184 110,-203 78,-217 44,-227 15,-231 -15,-231 -61,-223 -95,-211 -126,-194 -154,-172 -178,-147 -199,-118 -214,-86 -225,-53 -231,-18 -231,18 -225,53 -214,86 -199,118 -178,147 -154,172 -126,194 -95,211 -61,223 -15,231 15,231 44,227 78,217 110,203 140,184 166,160 189,133 207,102 220,70 228,35"/>
            </svg>
            <svg class="navcube" viewBox="0 0 160 160">
                <g fill="#e2e6f2">
                    <path d="M65 17L74 8L82 17ZM65 149H82L74 158ZM0 83L8 75V91ZM149 83L140 75V92Z"/>
                    <path d="M20 40V29L24 32Q36 19 52 14V18Q38 23 29 36L31 40ZM128 40V29L124 32Q112 19 95 14V18Q110 23 119 36L116 40Z"/>
                    <rect x="37" y="46" width="74" height="74" rx="12"/>
                </g>
                <rect x="46" y="54" width="56" height="58" rx="8" fill="#fbfcff"/>
                <path d="M42 52L47 56M106 52L101 56M42 114L47 109M106 114L101 109" stroke="#3a3a68" stroke-width="2"/>
                <path d="M58 58H89M58 108H89M49 68V97M98 68V97" stroke="#b8bccc"/>
                <path d="M40 117L46 111" stroke="#0000c0"/>
                <text x="74" y="97" text-anchor="middle" class="cube-label">Top</text>
                <text x="33" y="126" class="cube-axis">Z</text>
                <path d="M100 134L112 130L123 134V147L112 152L100 147Z" fill="#d8d8d8"/><path d="M100 134L112 130L123 134L112 139Z" fill="#fff"/><path d="M112 139L123 134V147L112 152Z" fill="#ececec"/>
                <path d="M127 138H141L134 145Z" fill="#383838"/>
            </svg>
            <svg class="axes" viewBox="0 0 72 72">
                <path d="M13 54V20" stroke="#228022" stroke-width="2"/><path d="M8 22L13 7L19 22Z" fill="#228022"/>
                <path d="M13 54H46" stroke="#882020" stroke-width="2"/><path d="M44 48L59 54L44 59Z" fill="#882020"/>
                <path d="M6 54L13 47L20 54L13 61Z" fill="#202080"/>
                <text x="16" y="8">Y</text><text x="61" y="55">X</text><text x="15" y="55">Z</text>
            </svg>
        </section>
        <div class="mdi-tabs">
            <div class="mdi-tab"><span>1*</span><button class="tab-close" aria-label="Close tab"><svg viewBox="0 0 10 10"><path d="M3 3L7 7M7 3L3 7"/></svg></button></div>
        </div>

        <aside class="combo">
            <div class="combo-title"><h2>Combo View</h2><button aria-label="Close panel">×</button></div>
            <div class="combo-tabs"><button>Model</button><button class="active">Tasks</button></div>
            <div class="combo-pane"><div class="tasks"></div></div>
        </aside>
    </main>

    <footer class="statusbar">
        <span class="message">Preselected: Cylinder - Unnamed.Cylinder.Edge1 (1.66527, -1.10116, 10)</span>
        <button class="navstyle">
            <svg viewBox="0 0 30 30"><path d="M3 7Q10 0 22 4" fill="none" stroke="#555" stroke-width="5"/><circle cx="23" cy="5" r="6" fill="#111"/><circle cx="6" cy="24" r="6" fill="#111"/><path d="M8 27Q18 32 26 24" fill="none" stroke="#aaa" stroke-width="4"/></svg>
            <span>Gesture</span>
        </button>
        <span class="dims">23.63 mm x 11.49 mm</span>
        <div class="tooltip">Windows Ink Workspace</div>
    </footer>

    <div class="taskbar">
        <button class="start" aria-label="Start"><svg viewBox="0 0 32 32"><path d="M0 4L12 2V15H0ZM14 2L32 0V15H14ZM0 17H12V30L0 28ZM14 17H32V32L14 30Z" fill="#fff"/></svg></button>
        <label class="search">
            <svg viewBox="0 0 32 32"><circle cx="21" cy="11" r="10"/><path d="M14 18L1 31"/></svg>
            <input type="text" placeholder="Type here to search" aria-label="Search">
        </label>
        <div class="apps">
            <button class="app" aria-label="Task view"><svg viewBox="0 0 48 48"><g fill="none" stroke="#fff" stroke-width="2"><path d="M9 17H29V31H9ZM9 9V13H29V9M9 39V35H29V39M37 9V14M37 24V39"/></g><circle cx="37" cy="20" r="3" fill="#fff"/></svg></button>
            <button class="app" aria-label="Store"><svg viewBox="0 0 48 48"><path d="M17 14C17 -2 31 -2 31 14M20 14C20 2 34 2 34 14" fill="none" stroke="#fff" stroke-width="2"/><path d="M0 13H48V42Q48 46 44 46H4Q0 46 0 42Z" fill="#fff"/><path d="M14 20H23V29H14Z" fill="#f25022"/><path d="M25 20H34V29H25Z" fill="#7fba00"/><path d="M14 31H23V40H14Z" fill="#00a4ef"/><path d="M25 31H34V40H25Z" fill="#ffb900"/></svg></button>
            <button class="app run" aria-label="Chrome"><svg viewBox="0 0 48 48"><circle cx="24" cy="24" r="22" fill="#fbc63c"/><path d="M24 24L5 13A22 22 0 0 0 22 46L33 29Z" fill="#1fa15a"/><path d="M24 24L5 13A22 22 0 0 1 44 14H24Z" fill="#dd4b3e"/><path d="M44 14H24L34 28L24 46A22 22 0 0 0 44 14Z" fill="#fbc63c"/><circle cx="24" cy="24" r="10" fill="#fff"/><circle cx="24" cy="24" r="8" fill="#4a8af4"/></svg></button>
            <button class="app" aria-label="Edge"><svg viewBox="0 0 48 48"><path d="M4 21C8 -4 44 -6 43 27H17C17 41 33 41 40 36V43C26 50 7 45 8 27C9 18 15 14 20 12C17 16 17 19 17 20H31C31 8 16 6 4 21Z" fill="#0a7bd8"/></svg></button>
            <button class="app" aria-label="File Explorer"><svg viewBox="0 0 48 48"><path d="M3 6H20L24 11V20H3Z" fill="#dca01a"/><path d="M3 12H22L25 9H45V40Q45 42 43 42H5Q3 42 3 40Z" fill="#fbd768"/><path d="M10 42V28Q10 25 13 25H35Q38 25 38 28V42H31V32H17V42Z" fill="#3c96dc"/></svg></button>
            <button class="app run" aria-label="Skype"><svg viewBox="0 0 48 48"><path d="M12 2Q18 0 23 3C38 3 45 16 42 28Q46 44 30 45C12 46 2 36 4 20Q-2 6 12 2Z" fill="#1aa4e0"/><path d="M11 6Q17 4 22 7C34 6 40 14 38 26Q39 38 30 40C14 42 8 32 8 20Q4 10 11 6Z" fill="#fff"/><path d="M31 16C27 9 15 11 16 18C17 25 31 21 31 29C31 37 18 37 15 30" fill="none" stroke="#1aa4e0" stroke-width="5"/><circle cx="38" cy="40" r="10" fill="#6fa81c" stroke="#f0f8e0" stroke-width="2"/><path d="M34 40L37 43L42 36" fill="none" stroke="#fff" stroke-width="2"/></svg></button>
            <button class="app run more" aria-label="Outlook"><svg viewBox="0 0 48 48"><rect x="14" y="2" width="32" height="42" rx="2" fill="#1473c4"/><path d="M16 8H30V30H16Z" fill="#28a0e6"/><path d="M30 8H44V18H30Z" fill="#50d0ff"/><path d="M30 18H44V30H30Z" fill="#28a0e6"/><path d="M11 24L30 36L48 24V44Q48 46 45 46H14Q11 46 11 43Z" fill="#2a9ae0"/><path d="M48 24V45L30 35Z" fill="#50c0f8"/><rect y="12" width="25" height="25" rx="2" fill="#0f68c0"/><ellipse cx="12" cy="24" rx="5" ry="6" fill="none" stroke="#fff" stroke-width="3"/></svg></button>
            <button class="app run" aria-label="Teams"><svg><use href="#teams"/></svg></button>
            <button class="app run current" aria-label="FreeCAD"><svg><use href="#freecad-task"/></svg></button>
            <button class="app run more" aria-label="Photos"><svg viewBox="0 0 48 48"><circle cx="24" cy="25" r="22" fill="none" stroke="#fff" stroke-width="2"/><path d="M6 1C24 -1 44 4 47 25C44 14 30 6 15 9Q6 7 6 1Z" fill="#fff"/><path d="M4 34L12 24L18 30L30 18L45 33C40 51 10 52 4 34Z" fill="#fff"/><path d="M11 41L20 28" stroke="#3b1f1f" stroke-width="3"/><circle cx="17" cy="16" r="3" fill="#fff"/></svg></button>
        </div>
        <div class="tray">
            <button aria-label="Hidden icons"><svg viewBox="0 0 32 32"><path d="M4 22L16 10L28 22" fill="none" stroke="#fff" stroke-width="2"/></svg></button>
            <button aria-label="OneDrive"><svg viewBox="0 0 32 32"><path d="M7 26A7 7 0 0 1 5 12C8 4 20 2 25 12A7 7 0 0 1 26 26Z" fill="#0f6cbd"/><path d="M5 24L18 14Q22 10 26 12A7 7 0 0 1 26 26H7Q2 26 1 22Z" fill="#28a8ea"/></svg></button>
            <button aria-label="Battery"><svg viewBox="0 0 32 32"><path d="M2 8H28V24H2Z" fill="none" stroke="#fff" stroke-width="2"/><path d="M5 11H21V21H5ZM29 13H31V19H29Z" fill="#fff"/></svg></button>
            <button aria-label="Teams status"><svg><use href="#teams"/></svg></button>
            <button aria-label="Network"><svg viewBox="0 0 32 32"><g fill="none" stroke="#fff" stroke-width="2"><path d="M5 29Q6 7 28 6M11 29Q12 13 28 12M17 29Q18 19 28 18"/></g><circle cx="25" cy="26" r="3" fill="#fff"/></svg></button>
            <button aria-label="Volume"><svg viewBox="0 0 32 32"><g fill="none" stroke="#fff" stroke-width="2"><path d="M1 11H5L12 5V27L5 21H1ZM17 11Q21 16 17 21"/><path d="M22 7Q28 16 22 25M26 3Q35 16 26 29" stroke="#8a7a7a"/></g></svg></button>
            <button class="ink" aria-label="Windows Ink"><svg viewBox="0 0 32 32"><g fill="none" stroke="#fff" stroke-width="2"><path d="M11 29L13 20L24 2Q29 1 28 7L17 26ZM18 10L21 13M14 24L24 8M10 17C-3 18 -1 32 8 30M22 18Q35 14 29 11"/></g></svg></button>
            <button class="lang">DEU</button>
            <button class="clock"><span>2:23 AM</span><span>2/12/2020</span></button>
            <button class="notify" aria-label="Notifications"><svg viewBox="0 0 48 48"><path d="M0 0H32V26H18L12 32V26H0Z" fill="#fff"/><path d="M6 7H26M6 13H26M6 19H20" stroke="#3b1f1f" stroke-width="2"/><circle cx="30" cy="30" r="16" fill="#352a2b" stroke="#a09898" stroke-width="2"/><text x="30" y="37" text-anchor="middle">3</text></svg></button>
        </div>
    </div>
</body>
</html>
```
FILE: styles.css
```css
* {
    box-sizing: border-box;
}

body {
    margin: 0;
    height: 100vh;
    display: flex;
    flex-direction: column;
    overflow: hidden;
    background-color: #efefef;
    color: #000;
    font-family: "Noto Sans", "Open Sans", sans-serif;
    font-size: 23px;
    line-height: 30px;
}

button {
    border: none;
    background: none;
    padding: 0;
    margin: 0;
    font: inherit;
    color: inherit;
}

svg {
    display: block;
    flex: none;
}

.sprite {
    position: absolute;
    width: 0;
    height: 0;
}

/* title and menu */
.titlebar {
    display: flex;
    align-items: center;
    height: 46px;
    background-color: #fff;
    color: #999;
}

.logo {
    width: 32px;
    height: 32px;
    margin: 0 5px 0 2px;
}

.window-buttons {
    display: flex;
    align-self: flex-start;
    margin-left: auto;
    padding-right: 3px;
}

.window-buttons button {
    width: 92px;
    height: 42px;
    display: flex;
    align-items: center;
    justify-content: center;
}

.window-buttons svg {
    width: 20px;
    height: 20px;
    fill: none;
    stroke: #999;
    stroke-width: 2;
}

.menubar {
    display: flex;
    align-items: center;
    height: 37px;
    background-color: #fff;
    border-bottom: 1px solid #e8e8e8;
}

.menubar button {
    padding: 0 8px;
}

/* toolbars */
.toolrow {
    display: flex;
    height: 60px;
    border-top: 1px solid #fafafa;
    border-bottom: 1px solid #aaa;
}

.toolbar {
    position: relative;
    display: flex;
    align-items: center;
    padding: 0 3px 0 18px;
    border-right: 1px solid #aaa;
}

.toolbar.last {
    border-right: none;
}

.toolbar.wide {
    flex: 1;
}

.toolbar::before {
    content: "";
    position: absolute;
    left: 5px;
    top: 5px;
    bottom: 5px;
    border-left: 2px dotted #b8b8b8;
}

.tool {
    width: 55px;
    height: 56px;
    display: flex;
    align-items: center;
    justify-content: center;
}

.tool svg {
    width: 48px;
    height: 48px;
}

.tool.drop {
    width: 79px;
    justify-content: flex-start;
    padding-left: 3px;
    gap: 10px;
}

.tool.drop::after {
    content: "";
    border: 7px solid transparent;
    border-top: 9px solid #222;
    border-bottom: none;
}

.tool.drop:disabled::after {
    border-top-color: #777;
}

.sep {
    width: 1px;
    height: 48px;
    margin: 0 6px 0 5px;
    background-color: #c8c8c8;
}

.workbench {
    position: relative;
    width: 211px;
    height: 31px;
}

.workbench select {
    appearance: none;
    width: 100%;
    height: 100%;
    padding: 0 0 0 24px;
    border: 1px solid #a8a8a8;
    border-radius: 0;
    background-color: #e1e1e1;
    font: inherit;
    font-size: 22px;
    line-height: 28px;
    color: #000;
}

.workbench::after {
    content: "";
    position: absolute;
    right: 6px;
    top: 13px;
    border: 4px solid transparent;
    border-top-color: #000;
}

.wb-icon {
    position: absolute;
    left: 4px;
    top: 6px;
    width: 18px;
    height: 18px;
}

/* 3d view */
.workspace {
    position: relative;
    flex: 1;
    min-height: 0;
    display: flex;
    flex-direction: column;
}

.view3d {
    position: relative;
    flex: 1;
    display: flex;
    align-items: center;
    justify-content: center;
    background-image: linear-gradient(#333366, #aaaac2);
    border-bottom: 1px solid #999;
}

.model {
    width: 464px;
    height: 464px;
    fill: #d6d6d6;
    stroke: #111;
    stroke-width: 2;
}

.navcube {
    position: absolute;
    right: -3px;
    top: 0;
    width: 160px;
    height: 160px;
}

.cube-label {
    font: 37px "Liberation Sans", sans-serif;
}

.cube-axis {
    font: 10px "Liberation Sans", sans-serif;
    fill: #0000c0;
}

.axes {
    position: absolute;
    right: 8px;
    bottom: 48px;
    width: 72px;
    height: 72px;
    font: 10px "Liberation Sans", sans-serif;
}

.mdi-tabs {
    display: flex;
    height: 40px;
}

.mdi-tab {
    display: flex;
    align-items: center;
    gap: 10px;
    padding-left: 388px;
    width: 471px;
    height: 39px;
    background-color: #fff;
    border: 1px solid #d8d8d8;
    border-top: none;
    font-size: 22px;
}

.tab-close {
    width: 14px;
    height: 14px;
    border: 1px solid #b84a30;
    border-radius: 2px;
    background-color: #e08060;
}

.tab-close svg {
    width: 12px;
    height: 12px;
    stroke: #fff;
    stroke-width: 2;
}

/* floating combo view */
.combo {
    position: absolute;
    left: 0;
    top: 4px;
    bottom: 0;
    width: 394px;
    display: flex;
    flex-direction: column;
    background-color: #fff;
    box-shadow: 2px 3px 8px rgba(0, 0, 0, 0.4);
}

.combo-title {
    display: flex;
    align-items: center;
    justify-content: space-between;
    height: 56px;
    padding: 0 1px 0 13px;
}

.combo-title h2 {
    margin: 0;
    font-size: 24px;
    font-weight: normal;
    color: #999;
}

.combo-title button {
    width: 40px;
    height: 40px;
    margin-top: 6px;
    background-color: #e3e3e3;
    color: #f6f6f6;
}

.combo-tabs {
    display: flex;
    align-items: flex-end;
    height: 34px;
    padding-left: 2px;
    background-color: #efefef;
    font-size: 22px;
}

.combo-tabs button {
    width: 100px;
    height: 32px;
    border: 1px solid #d8d8d8;
    border-bottom: none;
}

.combo-tabs .active {
    height: 34px;
    background-color: #fff;
}

.combo-pane {
    flex: 1;
    display: flex;
    margin: 0 2px 2px 0;
    padding: 0 1px 2px 2px;
    border: 1px solid #d8d8d8;
    border-left: none;
    border-top: none;
}

.tasks {
    flex: 1;
    border: 1px solid #828290;
    background: #333366 linear-gradient(#aaaac0, #333366) no-repeat 0 0 / 100% 382px;
}

/* status bar */
.statusbar {
    position: relative;
    display: flex;
    align-items: center;
    height: 51px;
    padding: 0 3px 0 6px;
}

.message {
    flex: 1;
}

.navstyle {
    display: flex;
    align-items: center;
    gap: 6px;
    width: 138px;
    padding-right: 8px;
    color: #222;
}

.navstyle svg {
    width: 30px;
    height: 30px;
}

.navstyle span {
    width: 72px;
    overflow: hidden;
    white-space: nowrap;
}

.navstyle::after {
    content: "";
    flex: none;
    border: 4px solid transparent;
    border-top-color: #222;
    border-bottom: none;
}

.dims {
    padding-left: 5px;
    border-left: 1px solid #ccc;
}

.tooltip {
    position: absolute;
    right: 217px;
    bottom: 1px;
    width: 271px;
    height: 37px;
    padding: 3px 6px;
    border: 1px solid #aaa;
    background-color: rgba(255, 255, 255, 0.4);
    box-shadow: 2px 2px 3px rgba(0, 0, 0, 0.2);
    color: rgba(80, 80, 80, 0.5);
    font-size: 22px;
    white-space: nowrap;
}

/* taskbar */
.taskbar {
    display: flex;
    height: 80px;
    background-image: linear-gradient(rgba(48, 42, 44, 0.5), rgba(64, 30, 30, 0)), linear-gradient(to right, #401e1d, #2d1d1e 30%, #3d1f1f 48%, #3f1f1f);
    color: #fff;
}

.start {
    width: 96px;
    display: flex;
    align-items: center;
    justify-content: center;
}

.start svg {
    width: 32px;
    height: 32px;
}

.search {
    display: flex;
    align-items: center;
    gap: 24px;
    width: 688px;
    padding-left: 22px;
    border: 2px solid #bbb;
    background-color: #f2f2f2;
}

.search svg {
    width: 32px;
    height: 32px;
    fill: none;
    stroke: #111;
    stroke-width: 2;
}

.search input {
    flex: 1;
    border: none;
    background: none;
    padding: 2px 0 0;
    font: inherit;
    font-size: 28px;
    outline: none;
}

.search input::placeholder {
    color: #333;
    opacity: 1;
}

.apps {
    display: flex;
    gap: 2px;
}

.app {
    position: relative;
    width: 96px;
    display: flex;
    align-items: center;
    justify-content: center;
}

.app:first-child {
    margin-right: 4px;
}

.app svg {
    width: 46px;
    height: 46px;
}

.app.run::after {
    content: "";
    position: absolute;
    left: 8px;
    right: 8px;
    bottom: 0;
    height: 4px;
    background-color: #76b9ed;
}

.app.more::after {
    border-right: 16px solid #5a8ab4;
}

.app.current {
    background-color: #5e4a4a;
}

.app.current::after {
    left: 0;
    right: 0;
}

.tray {
    display: flex;
    margin-left: auto;
    padding-right: 8px;
}

.tray button {
    width: 64px;
    display: flex;
    align-items: center;
    justify-content: center;
}

.tray svg {
    width: 32px;
    height: 32px;
}

.tray .ink {
    width: 80px;
    background-color: #4f3a3b;
}

.tray .lang {
    width: 71px;
}

.tray .clock {
    width: 136px;
    flex-direction: column;
    gap: 6px;
}

.tray .notify {
    width: 98px;
    border-right: 2px solid #8a7a7a;
}

.tray .notify svg {
    width: 48px;
    height: 48px;
    font-size: 20px;
    font-weight: bold;
    fill: #fff;
}
```
